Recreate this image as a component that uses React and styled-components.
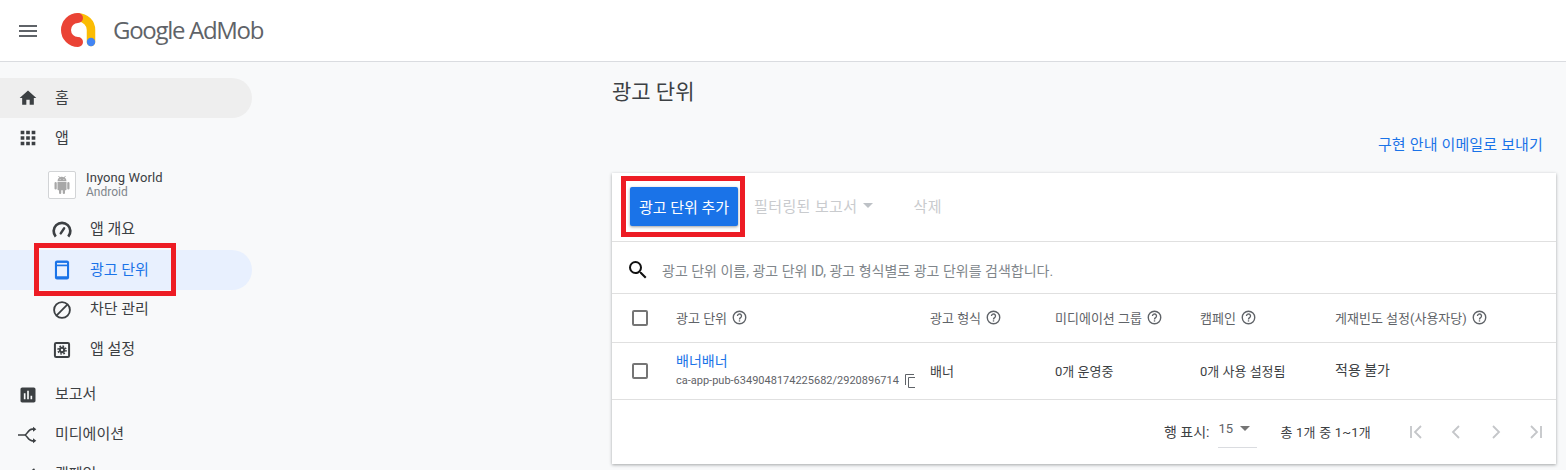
import React from 'react'
import styled, { createGlobalStyle } from 'styled-components'

const Global = createGlobalStyle`
html, body { margin: 0; padding: 0; height: 470px; overflow: hidden; background: #f8f9fa; }
body { font-family: Roboto, "Noto Sans CJK KR", sans-serif; }
`
const Page = styled.div`
  position: relative;
  width: 1566px;
  height: 470px;
  overflow: hidden;
`
const Header = styled.header`
  height: 61px;
  background: #fff;
  border-bottom: 1px solid #dadce0;
  display: flex;
  align-items: center;
  padding-left: 19px;
`
const Menu = styled.svg`
  width: 18px;
  height: 12px;
  margin-right: 24px;
`
const Logo = styled.svg`
  width: 36px;
  height: 36px;
  margin: -2px 16px 0 0;
`
const Brand = styled.span`
  font-size: 24px;
  font-family: "Open Sans", Roboto, sans-serif;
  color: #5f6368;
  letter-spacing: -1.3px;
  white-space: nowrap;
  margin-top: -3px;
`
const Body = styled.div`
  display: flex;
`
const Side = styled.nav`
  width: 252px;
  padding-top: 16px;
  flex: none;
`
const Item = styled.div`
  height: 40px;
  display: flex;
  align-items: center;
  padding-left: ${p => (p.$sub ? 52 : 18)}px;
  border-radius: 0 20px 20px 0;
  font-size: 15px;
  color: ${p => (p.$on === 'blue' ? '#1a73e8' : '#3c4043')};
  background: ${p => (p.$on === 'blue' ? '#e8f0fe' : p.$on === 'gray' ? '#eeeeee' : 'transparent')};
`
const Label = styled.span`
  margin-top: ${p => (p.$up ? -6 : -4)}px;
`
const NavIcon = styled.svg`
  width: ${p => p.$s || 20}px;
  height: ${p => p.$s || 20}px;
  margin-left: ${p => (20 - (p.$s || 20)) / 2}px;
  margin-right: ${p => (p.$sub ? 18 : 17) + (20 - (p.$s || 20)) / 2}px;
  flex: none;
`
const AppRow = styled.div`
  height: 52px;
  box-sizing: border-box;
  padding: 2px 0 0 48px;
  display: flex;
  align-items: center;
`
const AppThumb = styled.div`
  width: 26px;
  height: 26px;
  border: 1px solid #d2d4d6;
  border-radius: 2px;
  background: #fff;
  display: flex;
  align-items: center;
  justify-content: center;
  margin-right: 10px;
`
const AppName = styled.div`
  font-size: 13px;
  letter-spacing: 0.1px;
  line-height: 15px;
  color: #3c4043;
`
const AppPlatform = styled.div`
  font-size: 12px;
  line-height: 15px;
  color: #80868b;
`
const Gap = styled.div`
  height: 5px;
`
const Main = styled.main`
  flex: 1;
  padding: 0 10px 0 360px;
`
const Title = styled.h1`
  margin: 0;
  height: 60px;
  line-height: 60px;
  font-size: 21px;
  font-weight: 400;
  color: #3c4043;
`
const MailLink = styled.div`
  height: 51px;
  line-height: 46px;
  text-align: right;
  padding-right: 13px;
  font-size: 15px;
  letter-spacing: 0.15px;
  color: #1a73e8;
`
const Card = styled.section`
  width: 944px;
  height: 291px;
  background: #fff;
  box-shadow: 0 1px 3px rgba(60, 64, 67, 0.45);
`
const Toolbar = styled.div`
  height: 69px;
  box-sizing: border-box;
  border-bottom: 1px solid #e0e0e0;
  display: flex;
  align-items: center;
  padding-left: 18px;
`
const Primary = styled.button`
  height: 39px;
  width: 108px;
  border: 0;
  border-radius: 2px;
  background: #1a73e8;
  color: #fff;
  font: 400 15px Roboto, "Noto Sans CJK KR", sans-serif;
  box-shadow: 0 1px 3px rgba(60, 64, 67, 0.5);
  padding: 0;
  margin: -1px 16px 0 0;
`
const Disabled = styled.span`
  font-size: 15px;
  letter-spacing: 0.4px;
  color: #c9cbce;
  display: flex;
  align-items: center;
  margin: -3px ${p => p.$gap || 0}px 0 0;
`
const Caret = styled.span`
  display: inline-block;
  border-left: 5px solid transparent;
  border-right: 5px solid transparent;
  border-top: 5px solid ${p => p.$c || '#bdc1c6'};
  margin-left: ${p => p.$ml || 5}px;
`
const SearchBar = styled.div`
  height: 52px;
  box-sizing: border-box;
  border-bottom: 1px solid #e0e0e0;
  display: flex;
  align-items: center;
  padding: 5px 0 0 14px;
  font-size: 14px;
  color: #80868b;
`
const SearchIcon = styled.svg`
  width: 24px;
  height: 24px;
  margin-right: 12px;
`
const Row = styled.div`
  display: grid;
  grid-template-columns: 64px 254px 125px 145px 135px 1fr;
  align-items: center;
  height: ${p => p.$h}px;
  box-sizing: border-box;
  border-bottom: 1px solid #e0e0e0;
  font-size: 13px;
  color: ${p => p.$c};
`
const Check = styled.span`
  width: 12px;
  height: 12px;
  border: 2px solid #757575;
  border-radius: 2px;
  margin-left: 20px;
`
const HeadCell = styled.div`
  display: flex;
  align-items: center;
  gap: 5px;
  white-space: nowrap;
  margin-top: -2px;
`
const Help = styled.svg`
  width: 15px;
  height: 15px;
`
const UnitName = styled.div`
  font-size: 14px;
  line-height: 19px;
  color: #1a73e8;
`
const UnitId = styled.div`
  font-size: 11px;
  line-height: 19px;
  color: #5f6368;
  display: flex;
  align-items: center;
  gap: 6px;
`
const CopyIcon = styled.svg`
  width: 10px;
  height: 14px;
`
const Cell = styled.div`
  font-size: ${p => p.$s || 13}px;
  margin-top: ${p => p.$t || -2}px;
`
const Pager = styled.div`
  height: 64px;
  display: flex;
  align-items: center;
  justify-content: flex-end;
  padding-right: 8px;
  font-size: 14px;
  color: #3c4043;
`
const PagerText = styled.span`
  margin-top: -2px;
  font-size: ${p => p.$s || 14}px;
  letter-spacing: ${p => p.$ls || 0}px;
`
const PerPage = styled.div`
  width: 39px;
  height: 32px;
  margin: 0 24px 0 8px;
  border-bottom: 1px solid #dadce0;
  display: flex;
  align-items: center;
  box-sizing: border-box;
  padding: 0 0 6px 1px;
  font-size: 13px;
  color: #5f6368;
`
const PageIcon = styled.svg`
  width: 24px;
  height: 24px;
  margin-left: 16px;
  &:first-of-type { margin-left: 33px; }
`
const Mark = styled.div`
  position: absolute;
  left: ${p => p.$x}px;
  top: ${p => p.$y}px;
  width: ${p => p.$w}px;
  height: ${p => p.$h}px;
  box-sizing: border-box;
  border: 5px solid #ed1c24;
`

const paths = {
  home: 'M10 20v-6h4v6h5v-8h3L12 3 2 12h3v8z',
  apps: 'M4 8h4V4H4v4zm6 12h4v-4h-4v4zm-6 0h4v-4H4v4zm0-6h4v-4H4v4zm6 0h4v-4h-4v4zm6-10v4h4V4h-4zm-6 4h4V4h-4v4zm6 6h4v-4h-4v4zm0 6h4v-4h-4v4z',
  report: 'M19 3H5c-1.1 0-2 .9-2 2v14c0 1.100.9 2 2 2h14c1.100 0 2-.9 2-2V5c0-1.100-.9-2-2-2zM9 17H7v-7h2v7zm4 0h-2V7h2v10zm4 0h-2v-4h2v4z',
  search: 'M15.500 14h-.79l-.28-.27A6.471 6.471 0 0 0 16 9.500 6.500 6.500 0 1 0 9.500 16c1.610 0 3.090-.59 4.230-1.570l.27.28v.79l5 4.990L20.490 19l-4.990-5zm-6 0C7.010 14 5 11.990 5 9.500S7.010 5 9.500 5 14 7.010 14 9.500 11.990 14 9.500 14z',
  android: 'M6 18c0 .55.45 1 1 1h1v3.500a1.500 1.500 0 0 0 3 0V19h2v3.500a1.500 1.500 0 0 0 3 0V19h1c.55 0 1-.45 1-1V8H6v10zM3.500 8A1.500 1.500 0 0 0 2 9.500v7a1.500 1.500 0 0 0 3 0v-7A1.500 1.500 0 0 0 3.500 8zm17 0a1.500 1.500 0 0 0-1.500 1.500v7a1.500 1.500 0 0 0 3 0v-7A1.500 1.500 0 0 0 20.500 8zm-4.970-5.840 1.300-1.300a.5.5 0 0 0-.7-.7l-1.480 1.480A5.840 5.840 0 0 0 12 1c-.96 0-1.860.23-2.660.63L7.850.15a.5.5 0 0 0-.7.7l1.310 1.310A5.980 5.980 0 0 0 6 7h12a5.970 5.970 0 0 0-2.470-4.840zM10 5H9V4h1v1zm5 0h-1V4h1v1z',
  megaphone: 'M18 11v2h4v-2h-4zM16 17.600l3.200 2.400 1.200-1.600-3.200-2.400-1.200 1.600zM20.400 5.600 19.200 4 16 6.400 17.200 8l3.200-2.400zM4 9a2 2 0 0 0-2 2v2a2 2 0 0 0 2 2h1v4h2v-4h1l5 3V6L8 9H4z',
}

const HelpIcon = () => (
  <Help viewBox="0 0 24 24" fill="none" stroke="#5f6368" strokeWidth="2.200">
    <circle cx="12" cy="12" r="10" />
    <path d="M8.800 9.600a3.200 3.200 0 1 1 5 2.600c-1.200.8-1.800 1.300-1.800 2.800" />
    <path d="M12 16.500v2" />
  </Help>
)

const PagerIcon = ({ d }) => (
  <PageIcon viewBox="0 0 24 24" fill="none" stroke="#c4c6c9" strokeWidth="1.800"><path d={d} /></PageIcon>
)

function App() {
  return (
    <Page>
      <Global />
      <Header>
        <Menu viewBox="0 0 18 12"><path d="M0 0h18v2H0zM0 5h18v2H0zM0 10h18v2H0z" fill="#5f6368" /></Menu>
        <Logo viewBox="0 0 36 36" fill="none">
          <path d="M17 5.500c7.500 0 13 5.500 13 12.500V30" stroke="#fbbc04" strokeWidth="8.500" strokeLinecap="round" />
          <path d="M17 6a12 12 0 0 0 0 24" stroke="#ea4335" strokeWidth="10" strokeLinecap="round" />
          <circle cx="30" cy="30" r="4.200" fill="#4285f4" />
        </Logo>
        <Brand>Google AdMob</Brand>
      </Header>
      <Body>
        <Side>
          <Item $on="gray"><NavIcon viewBox="0 0 24 24"><path d={paths.home} fill="#3c4043" /></NavIcon><Label>홈</Label></Item>
          <Item><NavIcon $s={22} viewBox="0 0 24 24"><path d={paths.apps} fill="#3c4043" /></NavIcon><Label>앱</Label></Item>
          <AppRow>
            <AppThumb>
              <svg width="18" height="20" viewBox="0 0 24 24"><path fill="#a8a8a8" d={paths.android} /></svg>
            </AppThumb>
            <div>
              <AppName>Inyong World</AppName>
              <AppPlatform>Android</AppPlatform>
            </div>
          </AppRow>
          <Item $sub>
            <NavIcon $sub viewBox="0 0 24 24" fill="none" stroke="#3c4043">
              <path d="M4.500 20a10 10 0 1 1 15 0" strokeWidth="3.200" />
              <path d="M10.500 16 14.500 10" strokeWidth="3" strokeLinecap="round" />
            </NavIcon>
            <Label $up>앱 개요</Label>
          </Item>
          <Item $sub $on="blue">
            <NavIcon $sub viewBox="0 0 24 24">
              <rect x="3.500" y="0.500" width="17" height="23" rx="2.500" fill="#1a73e8" />
              <rect x="6" y="3.500" width="12" height="16" fill="#e8f0fe" />
              <rect x="6" y="5.500" width="12" height="2" fill="#1a73e8" />
            </NavIcon>
            <Label>광고 단위</Label>
          </Item>
          <Item $sub>
            <NavIcon $sub viewBox="0 0 24 24" fill="none" stroke="#3c4043" strokeWidth="2.200">
              <circle cx="12" cy="12" r="9.500" />
              <path d="M5.300 18.700 18.700 5.300" />
            </NavIcon>
            <Label $up>차단 관리</Label>
          </Item>
          <Item $sub>
            <NavIcon $sub viewBox="0 0 24 24" fill="none" stroke="#3c4043">
              <rect x="3.500" y="3.500" width="17" height="17" rx="1.500" strokeWidth="2.400" />
              <circle cx="12" cy="12" r="2.600" strokeWidth="2.400" />
              <circle cx="12" cy="12" r="4.800" strokeWidth="1.800" strokeDasharray="2 1.770" />
            </NavIcon>
            <Label $up>앱 설정</Label>
          </Item>
          <Gap />
          <Item><NavIcon viewBox="0 0 24 24"><path d={paths.report} fill="#3c4043" /></NavIcon><Label $up>보고서</Label></Item>
          <Item>
            <NavIcon viewBox="0 0 24 24" fill="none" stroke="#3c4043" strokeWidth="2">
              <path d="M0 12h8c3 0 4-7 9-7h3M8 12c3 0 4 7 9 7h3" />
              <path d="m18 2 4 3-4 3zM18 16l4 3-4 3z" fill="#3c4043" stroke="none" />
            </NavIcon>
            <Label $up>미디에이션</Label>
          </Item>
          <Item><NavIcon viewBox="0 0 24 24"><path d={paths.megaphone} fill="#3c4043" /></NavIcon><Label $up>캠페인</Label></Item>
        </Side>
        <Main>
          <Title>광고 단위</Title>
          <MailLink>구현 안내 이메일로 보내기</MailLink>
          <Card>
            <Toolbar>
              <Primary>광고 단위 추가</Primary>
              <Disabled $gap={41}>필터링된 보고서<Caret /></Disabled>
              <Disabled>삭제</Disabled>
            </Toolbar>
            <SearchBar>
              <SearchIcon viewBox="0 0 24 24"><path fill="#111" d={paths.search} /></SearchIcon>
              광고 단위 이름, 광고 단위 ID, 광고 형식별로 광고 단위를 검색합니다.
            </SearchBar>
            <Row $h={49} $c="#5f6368">
              <Check />
              <HeadCell>광고 단위<HelpIcon /></HeadCell>
              <HeadCell>광고 형식<HelpIcon /></HeadCell>
              <HeadCell>미디에이션 그룹<HelpIcon /></HeadCell>
              <HeadCell>캠페인<HelpIcon /></HeadCell>
              <HeadCell>게재빈도 설정(사용자당)<HelpIcon /></HeadCell>
            </Row>
            <Row $h={57} $c="#3c4043">
              <Check />
              <div>
                <UnitName>배너배너</UnitName>
                <UnitId>
                  ca-app-pub-6349048174225682/2920896714
                  <CopyIcon viewBox="0 0 10 14" fill="none" stroke="#5f6368">
                    <path d="M.5 11V.5H9M10 3.500H3.500v10H10" />
                  </CopyIcon>
                </UnitId>
              </div>
              <Cell>배너</Cell>
              <Cell>0개 운영중</Cell>
              <Cell>0개 사용 설정됨</Cell>
              <Cell $s={14} $t={-4}>적용 불가</Cell>
            </Row>
            <Pager>
              <PagerText>행 표시:</PagerText>
              <PerPage>15<Caret $c="#757575" $ml={7} /></PerPage>
              <PagerText $s={13} $ls={0.2}>총 1개 중 1~1개</PagerText>
              <PagerIcon d="M7 6v12M17 6l-6 6 6 6" />
              <PagerIcon d="m15 6-6 6 6 6" />
              <PagerIcon d="m9 6 6 6-6 6" />
              <PagerIcon d="M17 6v12M7 6l6 6-6 6" />
            </Pager>
          </Card>
        </Main>
      </Body>
      <Mark $x={34} $y={243} $w={142} $h={53} />
      <Mark $x={621} $y={176} $w={124} $h={61} />
    </Page>
  )
}

export default App
